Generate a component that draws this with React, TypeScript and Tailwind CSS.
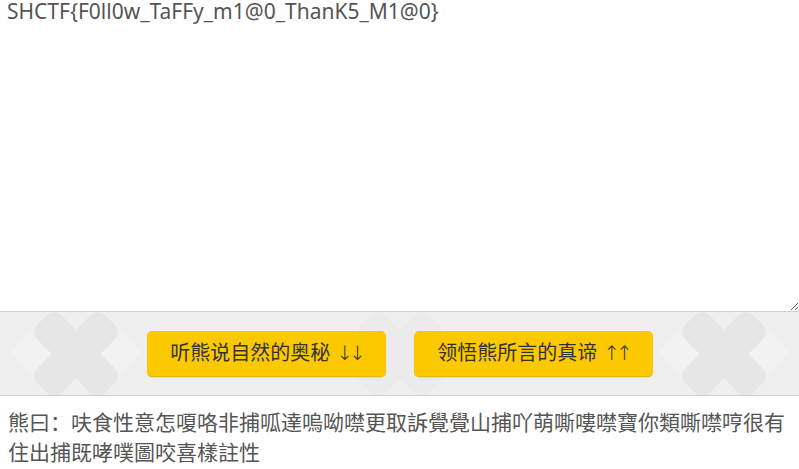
import { useState } from 'react'

const FLAG = 'SHCTF{F0ll0w_TaFFy_m1@0_ThanK5_M1@0}'
const BEAR =
  '熊曰：呋食性意怎嗄咯非捕呱達嗚呦噤更取訴覺覺山捕吖萌嘶嘍噤寶你類嘶噤哼很有住出捕既哮噗圖咬喜樣註性'

const font = '[font-family:"Noto_Sans","Noto_Sans_CJK_SC",sans-serif]'

function Cross({ x, tone = '#e6e6e6' }: { x: number; tone?: string }) {
  // soft faint X made of two rounded bars, with pale diamonds round it
  return (
    <g transform={`translate(${x} 42)`}>
      <rect x="-58" y="-22" width="40" height="40" rx="6" fill="#f2f2f2" transform="rotate(45 -38 -2)" />
      <rect x="18" y="-22" width="40" height="40" rx="6" fill="#f2f2f2" transform="rotate(45 38 -2)" />
      <rect x="-17" y="-48" width="34" height="96" rx="10" fill={tone} transform="rotate(45)" />
      <rect x="-17" y="-48" width="34" height="96" rx="10" fill={tone} transform="rotate(-45)" />
    </g>
  )
}

function Arrows({ dir }: { dir: 'up' | 'down' }) {
  return (
    <span className='ml-[6px] [font-family:"DejaVu_Sans",sans-serif] text-[20px] tracking-[-4px] font-light text-[#333]'>
      {dir === 'up' ? '\u2191\uFE0E\u2191\uFE0E' : '\u2193\uFE0E\u2193\uFE0E'}
    </span>
  )
}

export default function App() {
  const [text, setText] = useState(FLAG)

  return (
    <div className={`w-[799px] h-[469px] bg-white overflow-hidden ${font}`}>
      <textarea
        value={text}
        onChange={e => setText(e.target.value)}
        className="block w-full h-[311px] px-[7px] py-0 text-[21px] leading-[22px] text-[#555] outline-none border-0 resize-y"
      />

      {/* button band */}
      <div className="relative h-[85px] bg-[#efefef] border-y border-[#cfcfcf] flex items-center justify-center gap-[28px]">
        <svg className="absolute inset-0 w-full h-full" viewBox="0 0 799 83" preserveAspectRatio="none">
          <Cross x={76} />
          <Cross x={400} tone="#ebebeb" />
          <Cross x={724} />
        </svg>
        <button className="relative w-[239px] h-[46px] rounded-[5px] bg-[#fcc800] border-b border-[#e8b800] text-[20px] text-[#333] shadow-[0_1px_1px_rgba(0,0,0,0.08)]">
          听熊说自然的奥秘
          <Arrows dir="down" />
        </button>
        <button className="relative w-[239px] h-[46px] rounded-[5px] bg-[#fcc800] border-b border-[#e8b800] text-[20px] text-[#333] shadow-[0_1px_1px_rgba(0,0,0,0.08)]">
          领悟熊所言的真谛
          <Arrows dir="up" />
        </button>
      </div>

      <div className="px-[8px] pt-[11px] pr-[10px] text-[21px] leading-[30px] text-[#555] break-all">
        {BEAR}
      </div>
    </div>
  )
}
